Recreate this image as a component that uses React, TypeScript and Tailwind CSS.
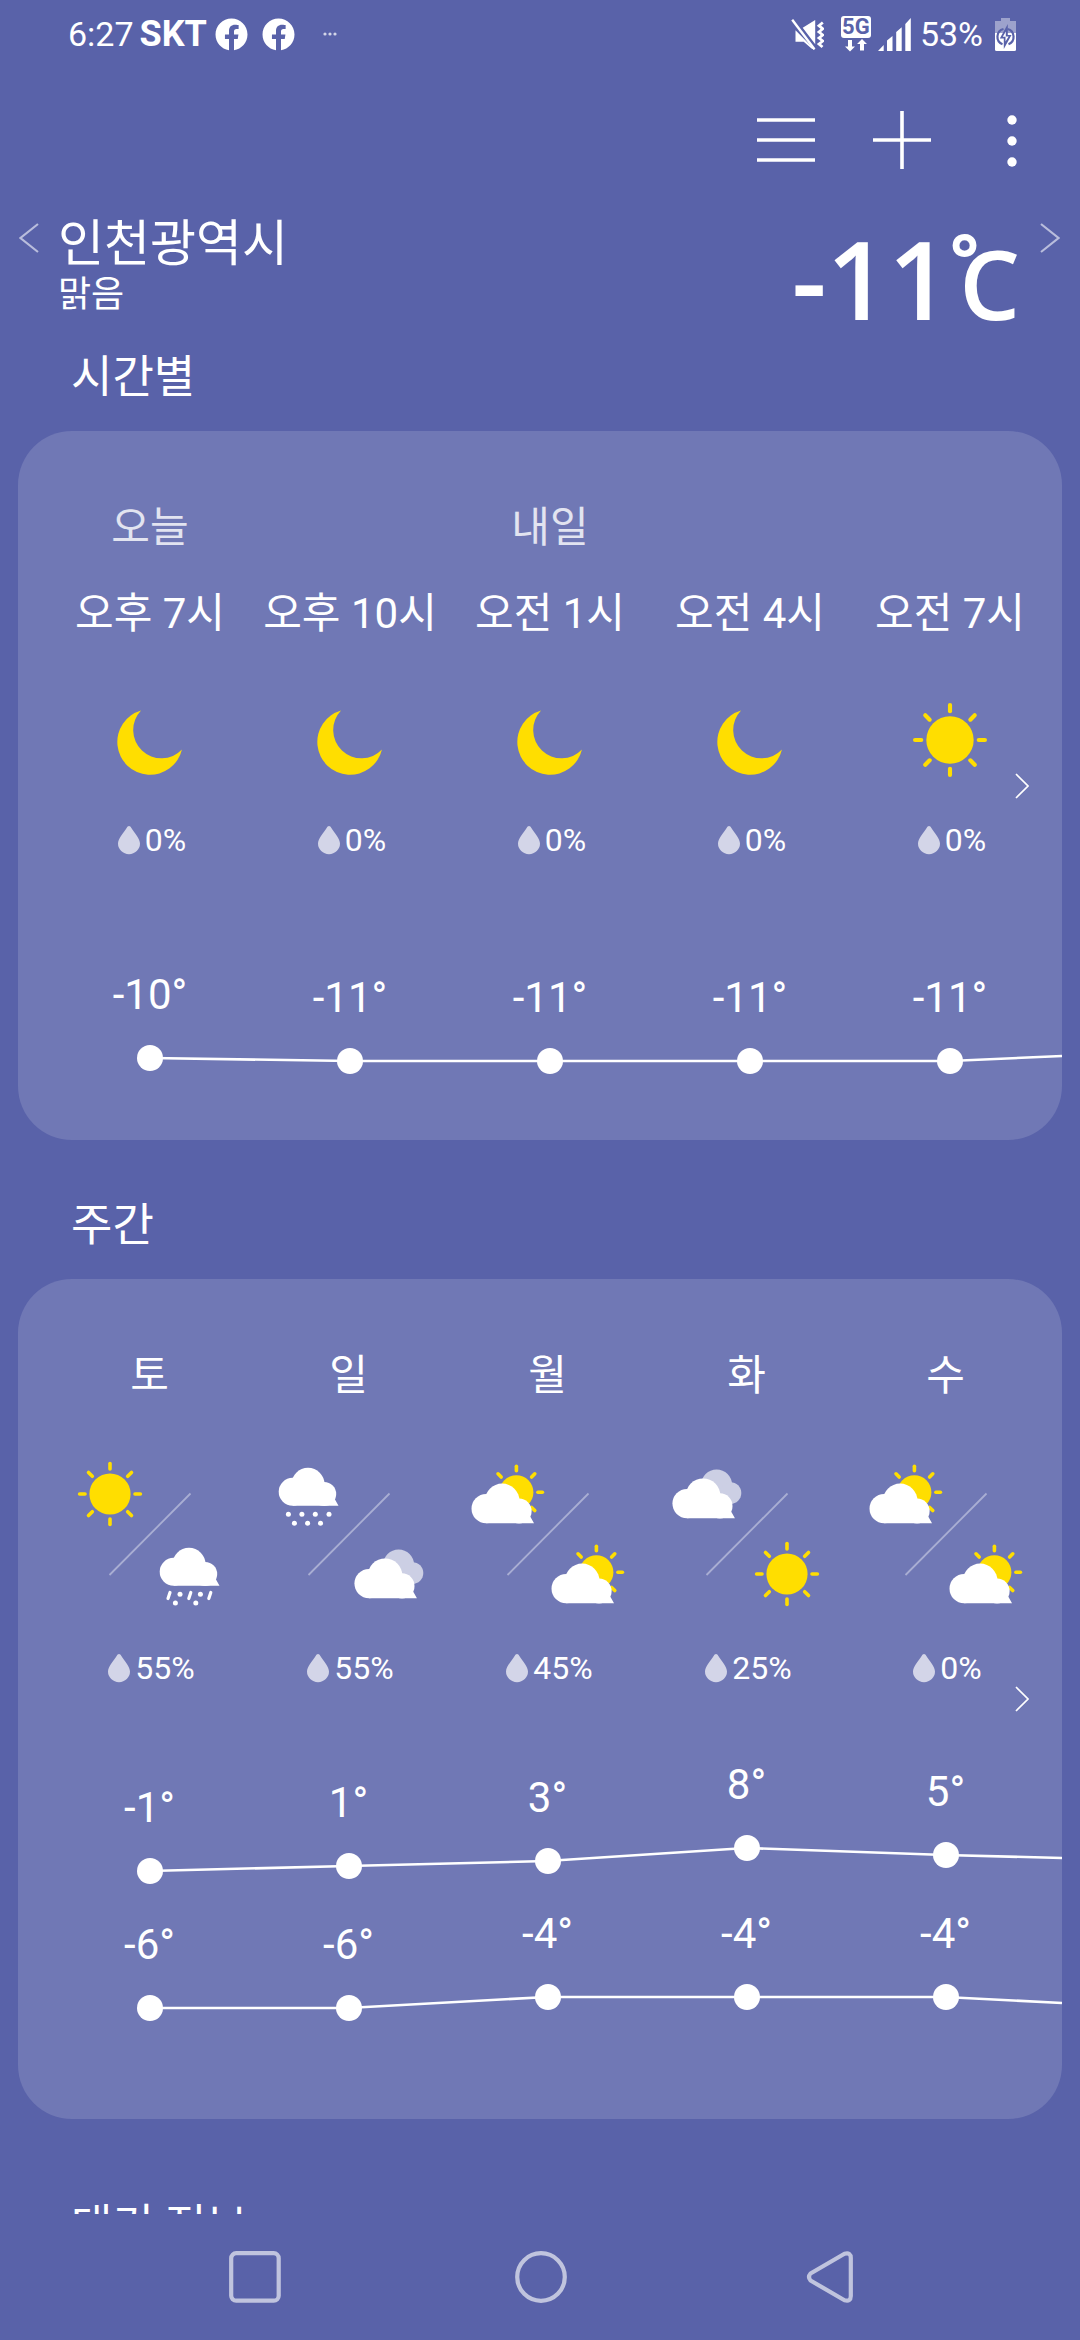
import type { ReactNode } from "react";
import { FaFacebook } from "react-icons/fa";

type IconName = "sun" | "moon" | "snow" | "sleet" | "cloudy" | "partly";

type Hour = {
  day: string;
  time: string;
  icon: IconName;
  rain: number;
};

type Day = {
  name: string;
  am: IconName;
  pm: IconName;
  rain: number;
};

type Point = {
  temp: number;
  y: number;
};

const hours: Hour[] = [
  { day: "오늘", time: "오후 7시", icon: "moon", rain: 0 },
  { day: "", time: "오후 10시", icon: "moon", rain: 0 },
  { day: "내일", time: "오전 1시", icon: "moon", rain: 0 },
  { day: "", time: "오전 4시", icon: "moon", rain: 0 },
  { day: "", time: "오전 7시", icon: "sun", rain: 0 },
];

const days: Day[] = [
  { name: "토", am: "sun", pm: "sleet", rain: 55 },
  { name: "일", am: "snow", pm: "cloudy", rain: 55 },
  { name: "월", am: "partly", pm: "partly", rain: 45 },
  { name: "화", am: "cloudy", pm: "sun", rain: 25 },
  { name: "수", am: "partly", pm: "partly", rain: 0 },
];

// y is the height of the dot inside the 150px chart
const hourlyTemps: Point[] = [
  { temp: -10, y: 88 },
  { temp: -11, y: 91 },
  { temp: -11, y: 91 },
  { temp: -11, y: 91 },
  { temp: -11, y: 91 },
];

const highs: Point[] = [
  { temp: -1, y: 121 },
  { temp: 1, y: 116 },
  { temp: 3, y: 111 },
  { temp: 8, y: 98 },
  { temp: 5, y: 105 },
];

const lows: Point[] = [
  { temp: -6, y: 108 },
  { temp: -6, y: 108 },
  { temp: -4, y: 97 },
  { temp: -4, y: 97 },
  { temp: -4, y: 97 },
];

const rayAngles = [0, 45, 90, 135, 180, 225, 270, 315];

function Sun({ x, y, r, inner, outer }: { x: number; y: number; r: number; inner: number; outer: number }) {
  return (
    <g fill="#ffde00" stroke="#ffde00">
      <circle cx={x} cy={y} r={r} stroke="none" />
      {rayAngles.map((angle) => (
        <path
          key={angle}
          d={`M${x} ${y - inner}V${y - outer}`}
          strokeLinecap="round"
          strokeWidth="3.6"
          transform={`rotate(${angle} ${x} ${y})`}
        />
      ))}
    </g>
  );
}

function Cloud() {
  return (
    <g fill="#fff">
      <circle cx="23.7" cy="37.8" r="14" />
      <circle cx="39" cy="30.4" r="16.6" />
      <circle cx="55.2" cy="40" r="12" />
      <path d="M23.7 51.8V34H60L66 45.5L69.5 51.8Z" />
    </g>
  );
}

function WeatherIcon({ name, className }: { name: IconName; className: string }) {
  return (
    <svg aria-hidden="true" className={className} viewBox="0 0 80 80">
      {name === "sun" && <Sun x={40} y={40} r={20.6} inner={25} outer={30.4} />}
      {name === "moon" && (
        <path
          d="M32.2 14.3A28.5 28.5 0 1 0 67.8 48.3A24.6 24.6 0 0 1 32.2 14.3Z"
          fill="#ffde00"
        />
      )}
      {name === "snow" && (
        <g fill="#fff">
          <Cloud />
          {[19.4, 32.9, 46.3, 60].map((x) => (
            <circle key={x} cx={x} cy="60.3" r="2.5" />
          ))}
          {[25.4, 38.6, 51.5].map((x) => (
            <circle key={x} cx={x} cy="69.3" r="2.5" />
          ))}
        </g>
      )}
      {name === "sleet" && (
        <g fill="#fff">
          <Cloud />
          <path
            d="M20 58.5L18 64.5M40.8 58.5L38.8 64.5M60.8 58.5L58.8 64.5"
            stroke="#fff"
            strokeLinecap="round"
            strokeWidth="3.2"
          />
          <circle cx="30" cy="60.2" r="2.5" />
          <circle cx="50.4" cy="60.2" r="2.5" />
          <circle cx="25.4" cy="69" r="2.5" />
          <circle cx="45.8" cy="69" r="2.5" />
        </g>
      )}
      {name === "cloudy" && (
        <>
          <g fill="#cccfe4">
            <circle cx="49.6" cy="31" r="15.5" />
            <circle cx="63.5" cy="39" r="10.8" />
          </g>
          <g transform="translate(-4.7 10.1) scale(1.045)">
            <Cloud />
          </g>
        </>
      )}
      {name === "partly" && (
        <>
          <Sun x={48.4} y={38.2} r={17} inner={21.5} outer={26} />
          <g transform="translate(-6.6 15.2) scale(1.045)">
            <Cloud />
          </g>
        </>
      )}
    </svg>
  );
}

function RainChance({ value }: { value: number }) {
  return (
    <p className="flex h-10 items-center justify-center gap-[5px] text-[32px] leading-10">
      <svg aria-hidden="true" className="h-[30px] w-[26px]" viewBox="0 0 26 30">
        <path
          d="M15 1C16 1 16.7 1.8 17.2 2.7C20.5 8 26 13.5 26 18.6A11 10.6 0 0 1 4 18.6C4 13.5 9.5 8 12.8 2.7C13.3 1.8 14 1 15 1Z"
          fill="#d3d5e8"
        />
      </svg>
      {value}%
    </p>
  );
}

function TempChart({ points, line, className }: { points: Point[]; line: string; className: string }) {
  return (
    <div className="relative h-[150px]">
      <svg
        aria-hidden="true"
        className="absolute inset-0 size-full"
        preserveAspectRatio="none"
        viewBox="0 0 1044 150"
      >
        <polyline fill="none" points={line} stroke="#fff" strokeWidth="2.6" />
      </svg>
      <ul className={`relative grid grid-cols-5 ${className}`}>
        {points.map((point, index) => (
          <li
            key={index}
            className="flex flex-col items-center text-[42px] leading-[48px]"
            style={{ paddingTop: point.y - 87 }}
          >
            {point.temp}°
            <span className="mt-[26px] size-[26px] rounded-full bg-white" />
          </li>
        ))}
      </ul>
    </div>
  );
}

function Chevron({ flip }: { flip?: boolean }) {
  return (
    <svg aria-hidden="true" className="h-[30px] w-5" fill="none" stroke="currentColor" viewBox="0 0 20 30">
      <path d={flip ? "M19 1L1.5 15L19 29" : "M1 1L18.5 15L1 29"} strokeWidth="2.2" />
    </svg>
  );
}

function ForecastCard({ label, children }: { label: string; children: ReactNode }) {
  return (
    <div className="relative mx-[18px] overflow-hidden rounded-[54px] bg-[#7078b5] pt-[73px]">
      {children}
      <button
        aria-label={label}
        className="absolute top-1/2 right-5 flex h-20 w-10 -translate-y-1/2 items-center justify-center"
        type="button"
      >
        <svg aria-hidden="true" className="h-[26px] w-[14px]" fill="none" stroke="#fff" viewBox="0 0 14 26">
          <path d="M1 1L13 13L1 25" strokeWidth="1.7" />
        </svg>
      </button>
    </div>
  );
}

function StatusBar() {
  return (
    <div className="flex h-[68px] items-center justify-between pr-16 pl-[68px] text-[34px] leading-10">
      <div className="flex items-center">
        <span>6:27</span>
        <span className="ml-[6px] text-[36px] font-bold">SKT</span>
        <FaFacebook className="ml-2 size-[33px]" />
        <FaFacebook className="ml-[14px] size-[33px]" />
        <svg aria-hidden="true" className="ml-7 h-1 w-[14px]" fill="#d3d5e8" viewBox="0 0 14 4">
          <circle cx="2" cy="2" r="1.6" />
          <circle cx="7" cy="2" r="1.6" />
          <circle cx="12" cy="2" r="1.6" />
        </svg>
      </div>
      <div className="flex items-center">
        <svg aria-hidden="true" className="size-[33px]" fill="#fff" viewBox="0 0 33 33">
          <path d="M11.7 9.7L24.2 2V26.3ZM4.5 12.3L24 32L20.5 30.5L12.7 23.7H4.5Z" />
          <path d="M1.2 1.8L23.5 31.2" fill="none" stroke="#fff" strokeWidth="2.4" />
          <path
            d="M31.8 4.5L28 7.7L31.8 10.8L28 14L31.8 17L28 20L31.8 23L28 26L31.5 29"
            fill="none"
            stroke="#fff"
            strokeWidth="2.8"
          />
        </svg>
        <div className="ml-[17px] flex flex-col items-center">
          <span className="w-[30px] rounded-[3px] bg-white text-center text-[22px] leading-[22px] font-bold text-[#5962a9]">
            5G
          </span>
          <svg aria-hidden="true" className="h-[14px] w-[22px]" fill="#fff" viewBox="0 0 22 14">
            <path d="M3 2H7V8.5H10L5 13.5L0 8.5H3ZM15 12.5H19V6H22L17 1L12 6H15Z" />
          </svg>
        </div>
        <svg aria-hidden="true" className="ml-[7px] size-[33px]" fill="#fff" viewBox="0 0 33 33">
          <path d="M0 33L5.7 27V33ZM9 33V22.5L14.5 18V33ZM18.2 33V14L23.7 9.3V33ZM27.3 33V6L32.8 0V33Z" />
        </svg>
        <span className="ml-[9px]">53%</span>
        <svg aria-hidden="true" className="ml-[12px] h-[33px] w-[21px]" viewBox="0 0 21 33">
          <path d="M6 0H15V3H21V15H0V3H6Z" fill="#9da2cc" />
          <path d="M0 15H21V31.5Q21 33 19.5 33H1.5Q0 33 0 31.5Z" fill="#fff" />
          <path
            d="M8.5 11A8 8 0 0 0 7.5 26.2M12.5 11A8 8 0 0 1 13.5 26.2"
            fill="none"
            stroke="#5962a9"
            strokeWidth="2.2"
          />
          <path d="M12.8 6V17H16.5L8.8 31V20.5H4.8Z" fill="#5962a9" />
          <path d="M10.8 13.5V18.6H13.6L10.5 23.5V18.8H7.8Z" fill="#fff" />
        </svg>
      </div>
    </div>
  );
}

function Toolbar() {
  return (
    <div className="flex h-[144px] items-center justify-end gap-[58px] pr-[63px]">
      <button aria-label="도시 목록" type="button">
        <svg aria-hidden="true" className="size-[58px]" viewBox="0 0 58 58">
          <path d="M0 9H58M0 29H58M0 49H58" stroke="#fff" strokeWidth="3.6" />
        </svg>
      </button>
      <button aria-label="도시 추가" type="button">
        <svg aria-hidden="true" className="size-[58px]" viewBox="0 0 58 58">
          <path d="M0 29H58M29 0V58" stroke="#fff" strokeWidth="3.6" />
        </svg>
      </button>
      <button aria-label="더보기" className="ml-[18px]" type="button">
        <svg aria-hidden="true" className="h-[58px] w-[10px]" fill="#fff" viewBox="0 0 10 58">
          <circle cx="5" cy="9" r="4.7" />
          <circle cx="5" cy="30" r="4.7" />
          <circle cx="5" cy="51" r="4.7" />
        </svg>
      </button>
    </div>
  );
}

export default function App() {
  return (
    <div className="flex h-screen flex-col bg-[#5962a9] font-['Roboto','Noto_Sans_CJK_KR',sans-serif] text-white">
      <main className="min-h-0 flex-1 overflow-hidden">
        <StatusBar />
        <Toolbar />

        <header className="mt-1 flex items-start">
          <button
            aria-label="이전 도시"
            className="flex h-11 w-[58px] items-center justify-center text-[#b9bddc]"
            type="button"
          >
            <Chevron flip />
          </button>
          <div className="h-[100px] flex-1">
            <h1 className="text-[50px] leading-[56px]">인천광역시</h1>
            <p className="text-[36px] leading-[46px]">맑음</p>
          </div>
          <p className="mt-[27px] flex h-[72px] items-baseline font-['Open_Sans',sans-serif] text-[108px] leading-[72px] font-semibold">
            <span>-11</span>
            <span className="self-start text-[68px] leading-7 font-bold">°</span>
            <span className="-ml-5 text-[96px]">C</span>
          </p>
          <button
            aria-label="다음 도시"
            className="flex h-11 w-[60px] items-center justify-center text-[#b9bddc]"
            type="button"
          >
            <Chevron />
          </button>
        </header>

        <section className="mt-8">
          <h2 className="mb-[23px] px-[71px] text-[45px] leading-[60px]">시간별</h2>
          <ForecastCard label="다음 시간">
            <ul className="mb-[110px] grid grid-cols-5 pr-3 pl-8">
              {hours.map((hour) => (
                <li key={hour.time} className="flex flex-col items-center text-[42px] leading-[48px]">
                  <p className="h-12 text-white/80">{hour.day}</p>
                  <p className="mt-[38px] whitespace-nowrap">{hour.time}</p>
                  <WeatherIcon className="mt-14 mb-[34px] size-[92px]" name={hour.icon} />
                  <RainChance value={hour.rain} />
                </li>
              ))}
            </ul>
            <TempChart
              className="pr-3 pl-8"
              line="132,88 332,91 532,91 732,91 932,91 1044,86"
              points={hourlyTemps}
            />
            <div className="h-5" />
          </ForecastCard>
        </section>

        <section className="mt-14">
          <h2 className="mb-[23px] px-[71px] text-[45px] leading-[60px]">주간</h2>
          <ForecastCard label="다음 요일">
            <ul className="mb-[62px] grid grid-cols-5 pr-[17px] pl-8">
              {days.map((day) => (
                <li key={day.name} className="flex flex-col items-center text-[42px] leading-[48px]">
                  <p>{day.name}</p>
                  <div className="relative mt-[54px] mb-[34px] grid grid-cols-2">
                    <WeatherIcon className="size-20" name={day.am} />
                    <WeatherIcon className="col-start-2 row-start-2 size-20" name={day.pm} />
                    <svg aria-hidden="true" className="absolute inset-0 size-full" viewBox="0 0 160 160">
                      <path d="M39.5 121L120.5 39.5" stroke="#a9aed3" strokeWidth="1.8" />
                    </svg>
                  </div>
                  <RainChance value={day.rain} />
                </li>
              ))}
            </ul>
            <TempChart
              className="pr-[17px] pl-8"
              line="131,121 330,116 529,111 728,98 927,105 1044,108"
              points={highs}
            />
            <TempChart
              className="pr-[17px] pl-8"
              line="131,108 330,108 529,97 728,97 927,97 1044,103"
              points={lows}
            />
            <div className="h-[69px]" />
          </ForecastCard>
        </section>

        <section className="mt-[78px]">
          <h2 className="px-[71px] text-[45px] leading-[60px]">대기 정보</h2>
        </section>
      </main>

      <nav className="flex h-[126px] shrink-0 items-center justify-between pr-[227px] pl-[229px]">
        <button aria-label="최근 앱" type="button">
          <svg aria-hidden="true" className="size-[52px]" fill="none" stroke="#c0c4de" viewBox="0 0 52 52">
            <rect height="47.5" rx="5" strokeWidth="4.2" width="47.5" x="2.2" y="2.2" />
          </svg>
        </button>
        <button aria-label="홈" type="button">
          <svg aria-hidden="true" className="size-[52px]" fill="none" stroke="#c0c4de" viewBox="0 0 52 52">
            <circle cx="26" cy="26" r="23.8" strokeWidth="4.2" />
          </svg>
        </button>
        <button aria-label="뒤로" type="button">
          <svg aria-hidden="true" className="size-[52px]" fill="none" stroke="#c0c4de" viewBox="0 0 52 52">
            <path
              d="M43.5 2.8L9.5 22.5Q6.5 26 9.5 29.5L43.5 49.2Q49.8 51 49.8 45V7Q49.8 1 43.5 2.8Z"
              strokeLinejoin="round"
              strokeWidth="4.2"
            />
          </svg>
        </button>
      </nav>
    </div>
  );
}
